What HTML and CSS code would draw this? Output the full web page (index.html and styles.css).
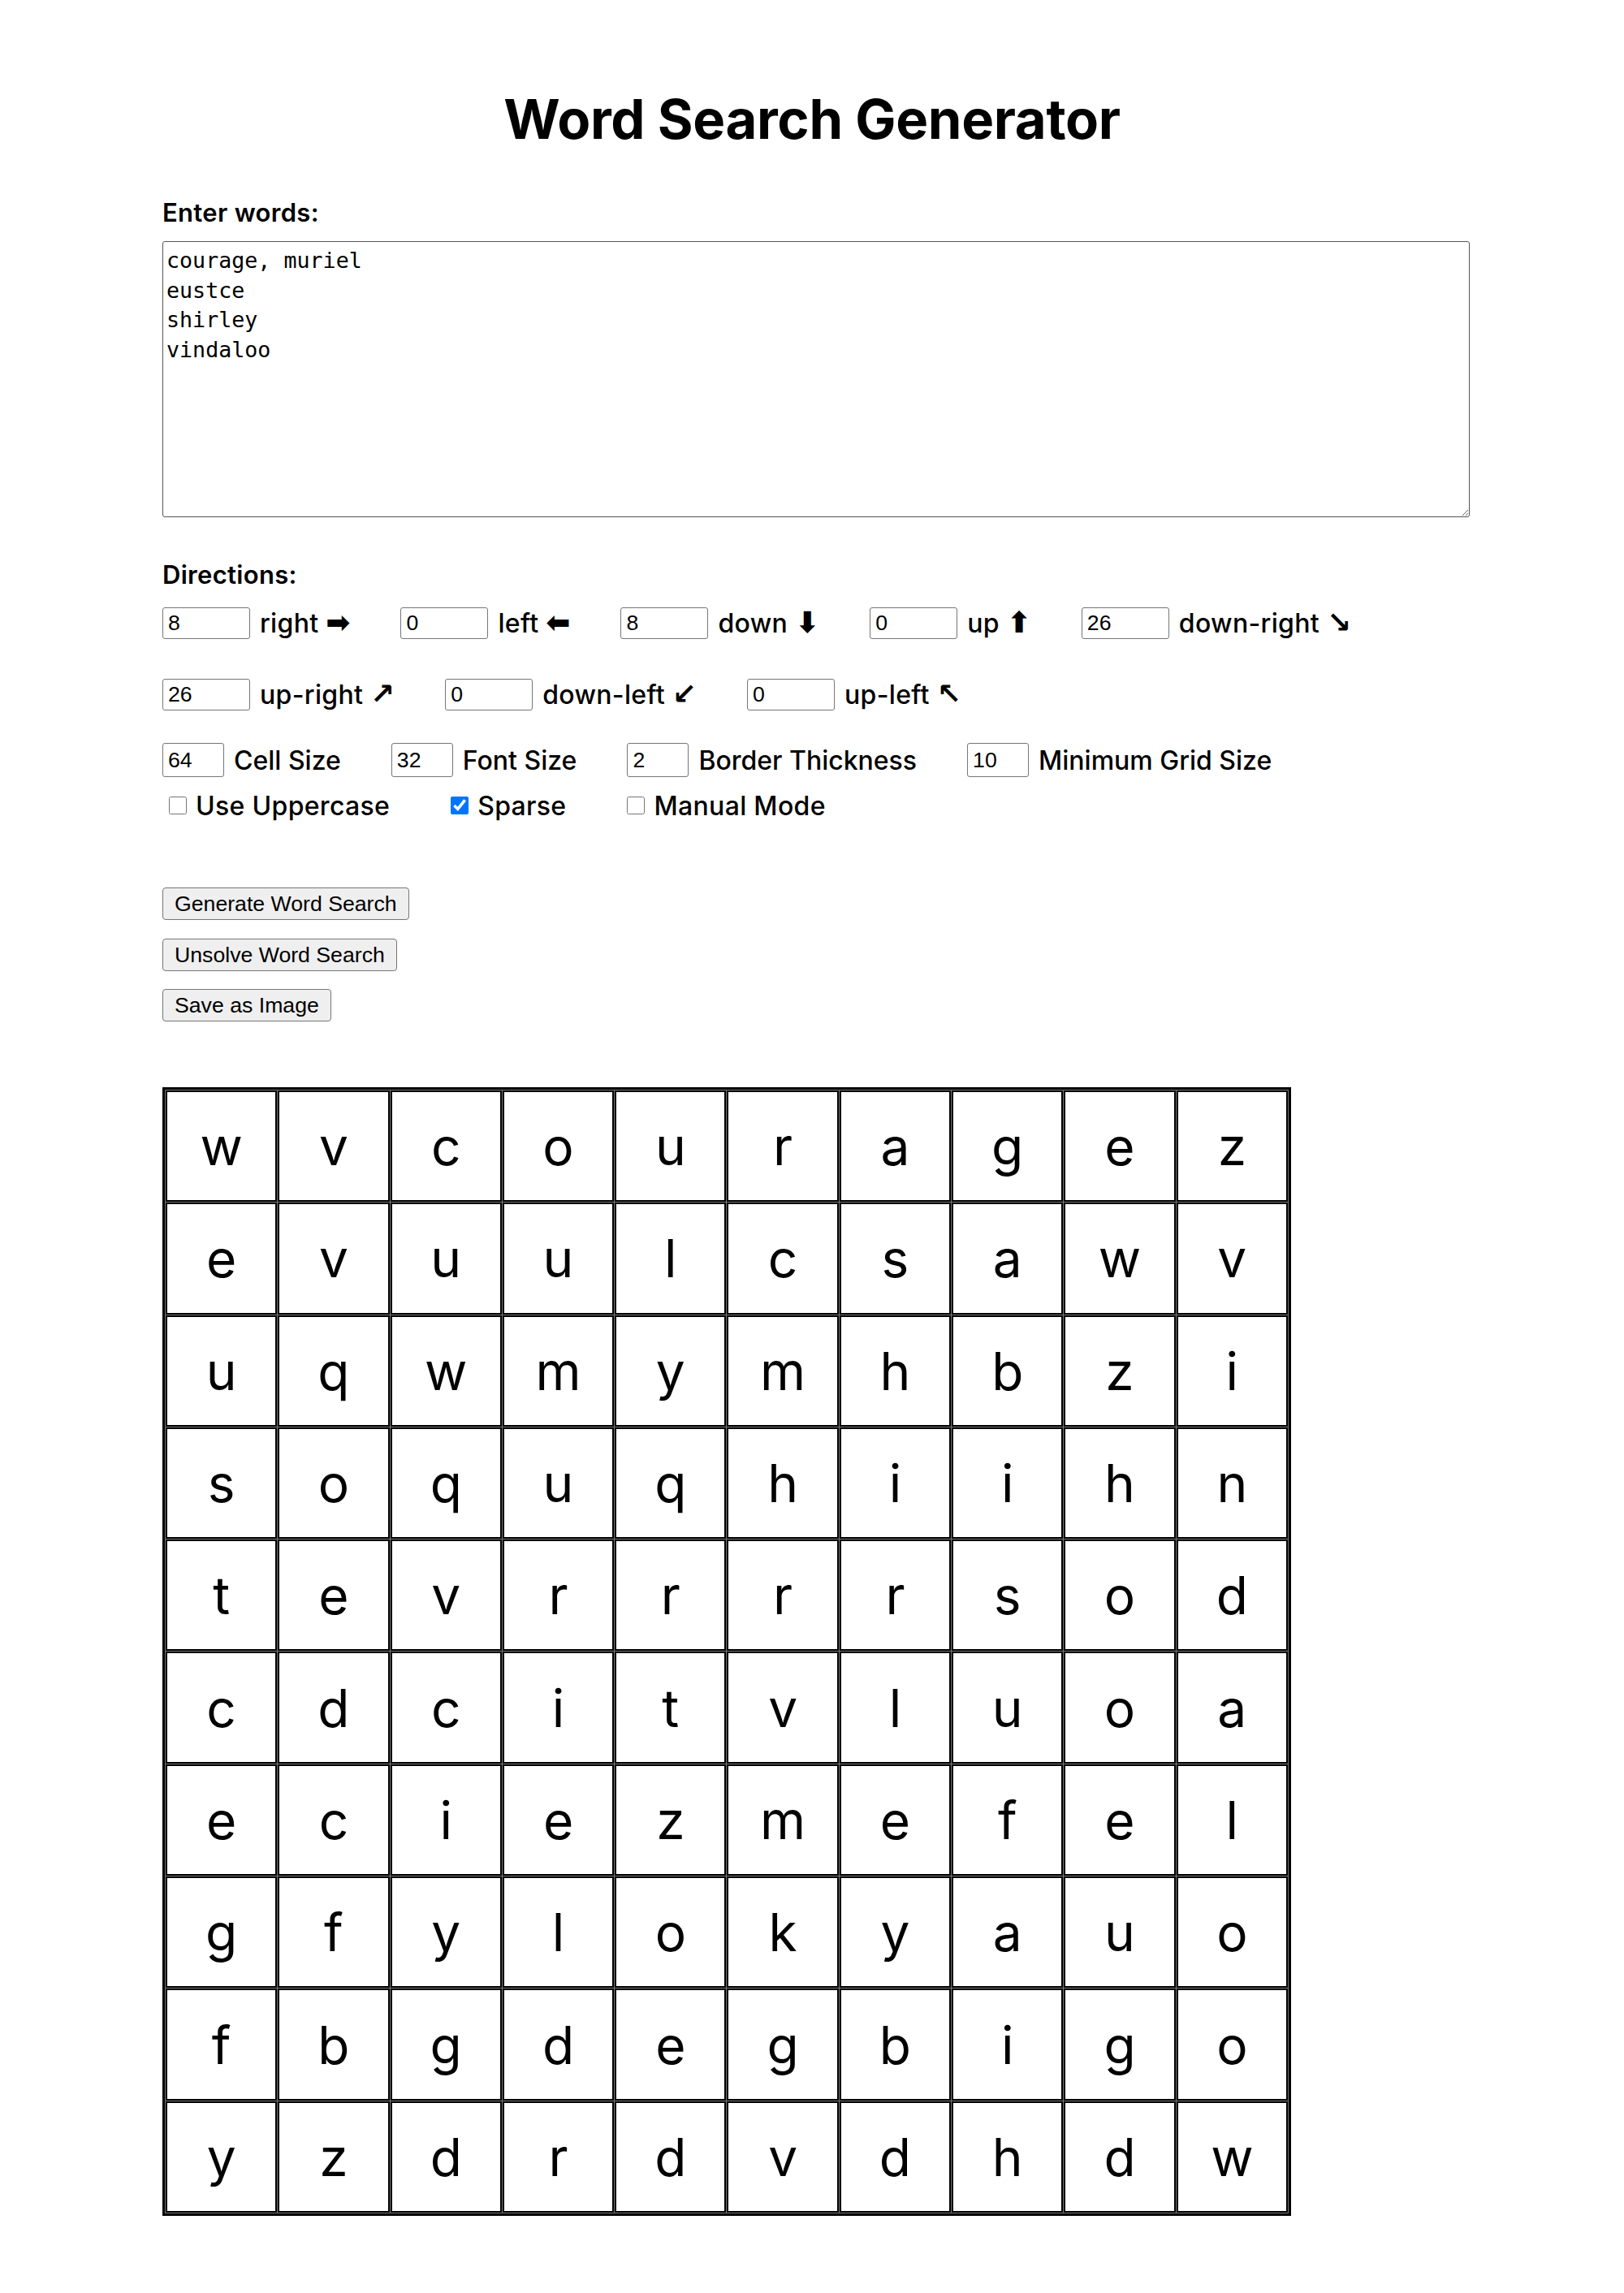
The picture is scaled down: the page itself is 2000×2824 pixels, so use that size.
FILE: index.html
```html
<!DOCTYPE html>
<html lang="en">
<head>
<meta charset="utf-8">
<title>Word Search Generator</title>
<link rel="stylesheet" href="styles.css">
</head>
<body>
<div class="page">
  <h1 class="title">Word Search Generator</h1>

  <label class="section-label words-label" for="words">Enter words:</label>
  <textarea id="words" class="words">courage, muriel
eustce
shirley
vindaloo</textarea>

  <div class="section-label dir-label">Directions:</div>
  <div class="options directions">
    <label class="opt"><input type="number" class="num num-wide" value="8"><span>right <span class="arrow">➡</span></span></label>
    <label class="opt"><input type="number" class="num num-wide" value="0"><span>left <span class="arrow">⬅</span></span></label>
    <label class="opt"><input type="number" class="num num-wide" value="8"><span>down <span class="arrow">⬇</span></span></label>
    <label class="opt"><input type="number" class="num num-wide" value="0"><span>up <span class="arrow">⬆</span></span></label>
    <label class="opt"><input type="number" class="num num-wide" value="26"><span>down-right <span class="arrow">↘</span></span></label>
    <label class="opt"><input type="number" class="num num-wide" value="26"><span>up-right <span class="arrow">↗</span></span></label>
    <label class="opt"><input type="number" class="num num-wide" value="0"><span>down-left <span class="arrow">↙</span></span></label>
    <label class="opt"><input type="number" class="num num-wide" value="0"><span>up-left <span class="arrow">↖</span></span></label>
  </div>

  <div class="options settings">
    <label class="opt"><input type="number" class="num num-narrow" value="64"><span>Cell Size</span></label>
    <label class="opt"><input type="number" class="num num-narrow" value="32"><span>Font Size</span></label>
    <label class="opt"><input type="number" class="num num-narrow" value="2"><span>Border Thickness</span></label>
    <label class="opt"><input type="number" class="num num-narrow" value="10"><span>Minimum Grid Size</span></label>
  </div>

  <div class="options checks">
    <label class="opt check"><input type="checkbox" class="box"><span>Use Uppercase</span></label>
    <label class="opt check"><input type="checkbox" class="box" checked><span>Sparse</span></label>
    <label class="opt check"><input type="checkbox" class="box"><span>Manual Mode</span></label>
  </div>

  <div class="actions">
    <button type="button" class="btn">Generate Word Search</button>
    <button type="button" class="btn">Unsolve Word Search</button>
    <button type="button" class="btn">Save as Image</button>
  </div>

  <table class="grid">
    <tbody>
      <tr><td>w</td><td>v</td><td>c</td><td>o</td><td>u</td><td>r</td><td>a</td><td>g</td><td>e</td><td>z</td></tr>
      <tr><td>e</td><td>v</td><td>u</td><td>u</td><td>l</td><td>c</td><td>s</td><td>a</td><td>w</td><td>v</td></tr>
      <tr><td>u</td><td>q</td><td>w</td><td>m</td><td>y</td><td>m</td><td>h</td><td>b</td><td>z</td><td>i</td></tr>
      <tr><td>s</td><td>o</td><td>q</td><td>u</td><td>q</td><td>h</td><td>i</td><td>i</td><td>h</td><td>n</td></tr>
      <tr><td>t</td><td>e</td><td>v</td><td>r</td><td>r</td><td>r</td><td>r</td><td>s</td><td>o</td><td>d</td></tr>
      <tr><td>c</td><td>d</td><td>c</td><td>i</td><td>t</td><td>v</td><td>l</td><td>u</td><td>o</td><td>a</td></tr>
      <tr><td>e</td><td>c</td><td>i</td><td>e</td><td>z</td><td>m</td><td>e</td><td>f</td><td>e</td><td>l</td></tr>
      <tr><td>g</td><td>f</td><td>y</td><td>l</td><td>o</td><td>k</td><td>y</td><td>a</td><td>u</td><td>o</td></tr>
      <tr><td>f</td><td>b</td><td>g</td><td>d</td><td>e</td><td>g</td><td>b</td><td>i</td><td>g</td><td>o</td></tr>
      <tr><td>y</td><td>z</td><td>d</td><td>r</td><td>d</td><td>v</td><td>d</td><td>h</td><td>d</td><td>w</td></tr>
    </tbody>
  </table>
</div>
</body>
</html>
```

FILE: styles.css
```css
body {
  margin: 0;
  background: #ffffff;
  color: #000000;
  font-family: Inter, "DejaVu Sans", sans-serif;
}

.page {
  width: 1600px;
  margin: 0 auto;
  padding: 107px 0 90px;
}

.title {
  margin: 0;
  font-size: 67px;
  line-height: 80px;
  font-weight: 700;
  text-align: center;
  letter-spacing: -0.005em;
}

.section-label {
  display: block;
  font-size: 31px;
  line-height: 40px;
  font-weight: 600;
  letter-spacing: 0.01em;
}

.words-label {
  margin: 55px 0 15px;
}

.dir-label {
  margin: 51px 0 20px;
}

.words {
  display: block;
  width: 100%;
  height: 331px;
  margin: 0;
  padding: 5px 4px 2px;
  border: 1px solid #555555;
  border-radius: 3px;
  background: #ffffff;
  color: #000000;
  font-family: "DejaVu Sans Mono", "Liberation Mono", monospace;
  font-size: 26.67px;
  line-height: 36.5px;
}

.options {
  display: flex;
  flex-wrap: wrap;
  column-gap: 62px;
  row-gap: 49px;
}

.opt {
  display: flex;
  align-items: center;
  gap: 12px;
  font-size: 32px;
  font-weight: 500;
  white-space: nowrap;
}

.directions .opt,
.checks .opt {
  letter-spacing: 0.01em;
}

.arrow {
  font-family: "DejaVu Sans", sans-serif;
  font-weight: 700;
  font-size: 36px;
  line-height: 1;
  letter-spacing: 0;
}

.num {
  box-sizing: border-box;
  height: 39px;
  margin: 0;
  padding: 0 4px 0 6px;
  border: 1px solid #767676;
  border-radius: 3px;
  background: #ffffff;
  color: #000000;
  font-family: "Liberation Sans", Arial, sans-serif;
  font-size: 26.67px;
  letter-spacing: 0;
}

.num-wide {
  width: 108px;
}

.num-narrow {
  width: 76px;
  height: 42px;
}

.settings {
  margin-top: 40px;
}

.checks {
  margin-top: 15px;
  height: 40px;
  align-items: center;
  column-gap: 67px;
}

.check {
  gap: 11px;
}

.box {
  width: 22px;
  height: 22px;
  margin: 0 0 0 8px;
}

.actions {
  display: flex;
  flex-direction: column;
  align-items: flex-start;
  gap: 22.5px;
  margin-top: 81px;
}

.btn {
  box-sizing: border-box;
  height: 40px;
  margin: 0;
  padding: 3px 14px;
  border: 1px solid #767676;
  border-radius: 4px;
  background: #efefef;
  color: #000000;
  font-family: "Liberation Sans", Arial, sans-serif;
  font-size: 26.67px;
  line-height: 32px;
}

.grid {
  margin-top: 81px;
  border: 3px solid #000000;
  border-spacing: 1px;
  background: #777777;
}

.grid td {
  width: 133.3px;
  height: 133.3px;
  padding: 0;
  border: 2px solid #000000;
  background: #ffffff;
  text-align: center;
  vertical-align: middle;
  font-size: 64px;
  font-weight: 400;
}
```
